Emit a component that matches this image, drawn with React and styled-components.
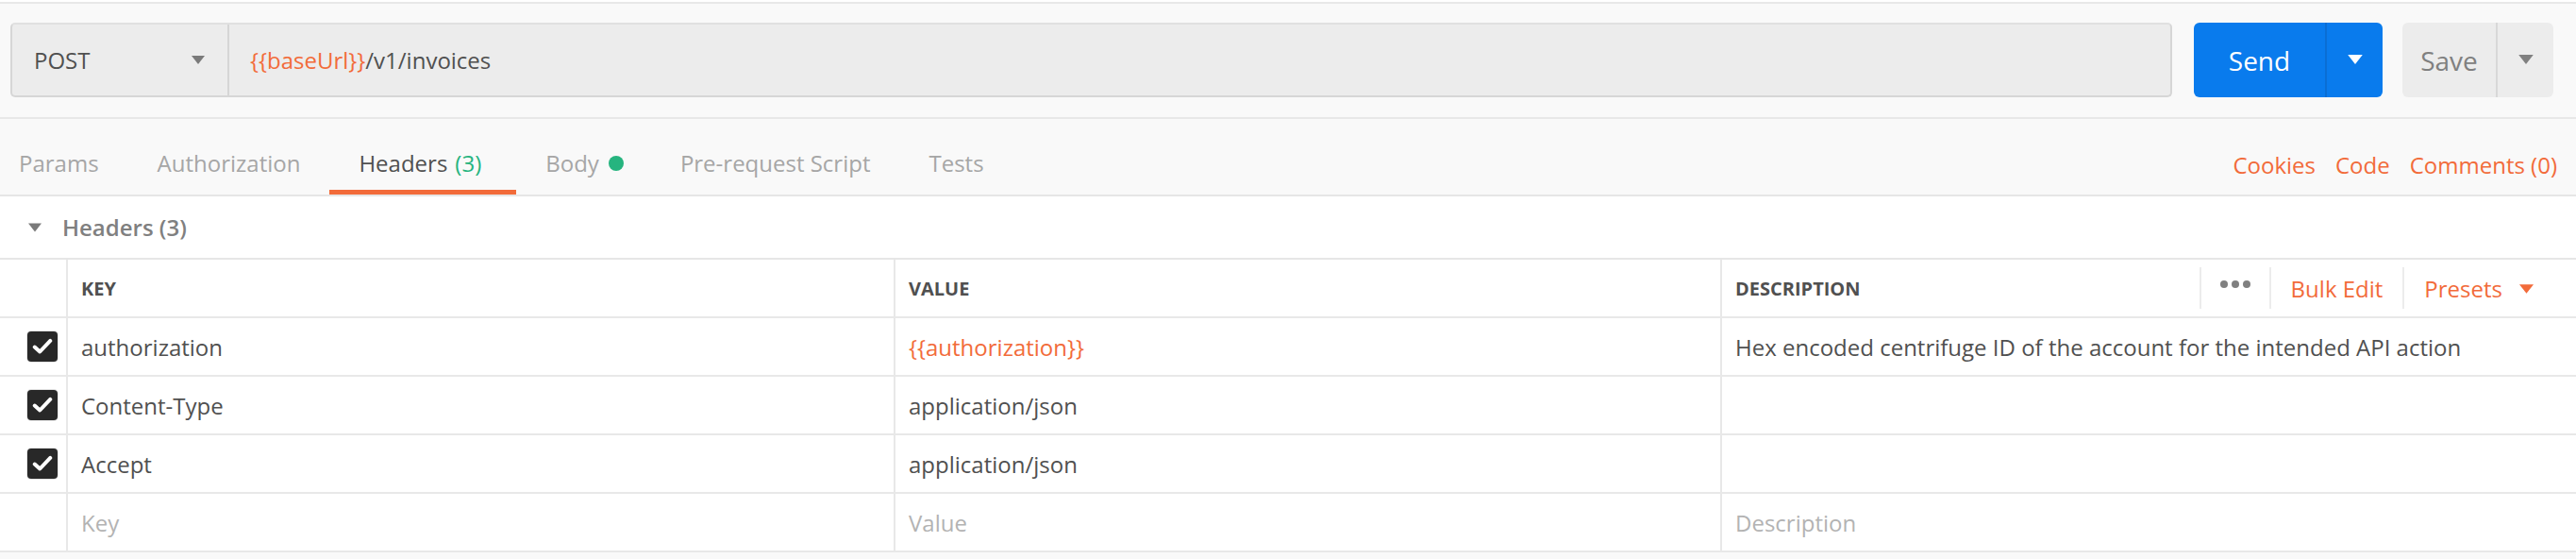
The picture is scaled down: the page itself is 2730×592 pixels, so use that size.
import React from "react";
import styled, { createGlobalStyle } from "styled-components";

const GlobalStyle = createGlobalStyle`
  html, body {
    margin: 0;
    padding: 0;
    background: #ffffff;
  }
  body {
    font-family: "Open Sans", "Noto Sans", sans-serif;
    color: #505050;
    -webkit-font-smoothing: antialiased;
  }
`;

const ORANGE = "#f26b3a";

const tabs = [
  { label: "Params" },
  { label: "Authorization" },
  { label: "Headers", count: "(3)", active: true },
  { label: "Body", dot: true },
  { label: "Pre-request Script" },
  { label: "Tests" },
];

const headers = [
  {
    key: "authorization",
    value: "{{authorization}}",
    variable: true,
    description: "Hex encoded centrifuge ID of the account for the intended API action",
  },
  { key: "Content-Type", value: "application/json" },
  { key: "Accept", value: "application/json" },
];

const Caret = ({ color = "#7a7a7a", width = 14, height = 9 }) => (
  <svg width={width} height={height} viewBox="0 0 14 9">
    <path d="M0 0 L14 0 L7 9 Z" fill={color} />
  </svg>
);

const App = () => {
  return (
    <Page>
      <GlobalStyle />
      <RequestBar>
        <UrlGroup>
          <MethodSelect>
            <span>POST</span>
            <Caret />
          </MethodSelect>
          <UrlInput>
            <Variable>{"{{baseUrl}}"}</Variable>/v1/invoices
          </UrlInput>
        </UrlGroup>
        <SplitButton $primary>
          <MainPart $primary $width={139}>Send</MainPart>
          <CaretPart $primary>
            <Caret color="#ffffff" width={16} height={10} />
          </CaretPart>
        </SplitButton>
        <SplitButton>
          <MainPart $width={99}>Save</MainPart>
          <CaretPart>
            <Caret color="#808080" width={16} height={10} />
          </CaretPart>
        </SplitButton>
      </RequestBar>

      <TabBar>
        <TabList>
          {tabs.map((t) => (
            <Tab key={t.label} $active={t.active}>
              {t.label}
              {t.count && <Count>{t.count}</Count>}
              {t.dot && <Dot />}
            </Tab>
          ))}
        </TabList>
        <Links>
          <LinkText>Cookies</LinkText>
          <LinkText>Code</LinkText>
          <LinkText>Comments (0)</LinkText>
        </Links>
      </TabBar>

      <SectionTitle>
        <Caret color="#7a7a7a" width={14} height={10} />
        <span>Headers (3)</span>
      </SectionTitle>

      <Table>
        <Row $head>
          <CheckCell />
          <Cell>
            <HeadLabel>KEY</HeadLabel>
          </Cell>
          <Cell>
            <HeadLabel>VALUE</HeadLabel>
          </Cell>
          <Cell $last>
            <HeadLabel>DESCRIPTION</HeadLabel>
            <HeadActions>
              <Action $narrow>
                <Dots>
                  <i />
                  <i />
                  <i />
                </Dots>
              </Action>
              <Action>
                <LinkText>Bulk Edit</LinkText>
              </Action>
              <Action $caret>
                <LinkText>Presets</LinkText>
                <Caret color={ORANGE} width={15} height={12} />
              </Action>
            </HeadActions>
          </Cell>
        </Row>
        {headers.map((h) => (
          <Row key={h.key}>
            <CheckCell>
              <CheckBox>
                <svg width="22" height="18" viewBox="0 0 20 16">
                  <path
                    d="M2.5 8.5 L7.5 13 L17.5 2.5"
                    fill="none"
                    stroke="#ffffff"
                    strokeWidth="3.6"
                    strokeLinecap="round"
                    strokeLinejoin="round"
                  />
                </svg>
              </CheckBox>
            </CheckCell>
            <Cell>{h.key}</Cell>
            <Cell>{h.variable ? <Variable>{h.value}</Variable> : h.value}</Cell>
            <Cell $last>{h.description}</Cell>
          </Row>
        ))}
        <Row>
          <CheckCell />
          <Cell $placeholder>Key</Cell>
          <Cell $placeholder>Value</Cell>
          <Cell $placeholder $last>
            Description
          </Cell>
        </Row>
      </Table>
      <Footer />
    </Page>
  );
};

export default App;

const Page = styled.div`
  width: 2730px;
  min-height: 592px;
  display: flex;
  flex-direction: column;
  background: #f9f9f9;
  box-sizing: border-box;
  border-top: 2px solid #ffffff;
`;

const RequestBar = styled.div`
  display: flex;
  align-items: stretch;
  gap: 21px;
  height: 79px;
  padding: 20px 24px 21px 11px;
  background: #f9f9f9;
  border-top: 2px solid #e8e8e8;
  border-bottom: 2px solid #e8e8e8;
`;

const UrlGroup = styled.div`
  flex: 1;
  display: flex;
  background: #ececec;
  border: 2px solid #d6d6d6;
  border-top-color: #e0e0e0;
  border-radius: 5px;
  box-sizing: border-box;
  margin-right: 2px;
`;

const MethodSelect = styled.div`
  width: 230px;
  flex: none;
  display: flex;
  align-items: center;
  justify-content: space-between;
  box-sizing: border-box;
  padding: 0 24px 0 23px;
  border-right: 2px solid #d6d6d6;
  font-size: 24px;
  color: #505050;
`;

const UrlInput = styled.div`
  flex: 1;
  display: flex;
  align-items: center;
  padding-left: 22px;
  font-size: 24px;
  color: #505050;
`;

const Variable = styled.span`
  color: ${ORANGE};
`;

const SplitButton = styled.div`
  display: flex;
  border-radius: 6px;
  overflow: hidden;
  background: ${(p) => (p.$primary ? "#097bed" : "#ececec")};
`;

const MainPart = styled.div`
  width: ${(p) => p.$width}px;
  display: flex;
  align-items: center;
  justify-content: center;
  font-size: 28px;
  color: ${(p) => (p.$primary ? "#ffffff" : "#808080")};
  border-right: 2px solid ${(p) => (p.$primary ? "#0a6ed4" : "#d8d8d8")};
`;

const CaretPart = styled.div`
  width: 59px;
  display: flex;
  align-items: center;
  justify-content: center;
  padding-bottom: 2px;
`;

const TabBar = styled.div`
  display: flex;
  align-items: stretch;
  justify-content: space-between;
  height: 80px;
  background: #f9f9f9;
  border-bottom: 2px solid #e6e6e6;
`;

const TabList = styled.div`
  display: flex;
  align-items: stretch;
`;

const Tab = styled.div`
  display: flex;
  align-items: center;
  padding: 18px 31px 0;
  font-size: 24px;
  color: ${(p) => (p.$active ? "#505050" : "#a6a6a6")};
  border-bottom: 5px solid ${(p) => (p.$active ? ORANGE : "transparent")};
  &:first-child {
    padding-left: 20px;
  }
`;

const Count = styled.span`
  color: #26b47f;
  margin-left: 8px;
  margin-right: 6px;
`;

const Dot = styled.span`
  width: 16px;
  height: 16px;
  border-radius: 50%;
  background: #26b47f;
  margin-left: 10px;
  margin-right: -2px;
`;

const Links = styled.div`
  display: flex;
  align-items: center;
  gap: 21px;
  padding: 16px 20px 0 0;
`;

const LinkText = styled.span`
  font-size: 24px;
  color: ${ORANGE};
  white-space: nowrap;
`;

const SectionTitle = styled.div`
  display: flex;
  align-items: center;
  gap: 22px;
  height: 65px;
  padding-left: 30px;
  background: #ffffff;
  font-size: 24px;
  font-weight: 600;
  color: #808080;
`;

const Table = styled.div`
  background: #ffffff;
  border-top: 2px solid #e6e6e6;
`;

const Row = styled.div`
  display: grid;
  grid-template-columns: 72px 877px 876px 1fr;
  height: 60px;
  border-bottom: 2px solid #e8e8e8;
`;

const CheckCell = styled.div`
  display: flex;
  align-items: center;
  padding-left: 29px;
  border-right: 2px solid #e8e8e8;
`;

const CheckBox = styled.div`
  width: 32px;
  height: 32px;
  box-sizing: border-box;
  border-radius: 4px;
  background: #282828;
  box-shadow: 0 0 0 1px #e4e4e4;
  display: flex;
  align-items: center;
  justify-content: center;
`;

const Cell = styled.div`
  display: flex;
  align-items: center;
  padding-left: 14px;
  font-size: 24px;
  color: ${(p) => (p.$placeholder ? "#b3b3b3" : "#505050")};
  border-right: ${(p) => (p.$last ? "none" : "2px solid #e8e8e8")};
  white-space: nowrap;
  overflow: hidden;
`;

const HeadLabel = styled.span`
  font-size: 20px;
  font-weight: 700;
  color: #505050;
`;

const HeadActions = styled.div`
  margin-left: auto;
  display: flex;
  align-items: center;
  align-self: center;
  padding-right: 24px;
`;

const Action = styled.div`
  display: flex;
  align-items: center;
  gap: 18px;
  height: 44px;
  padding: 0 ${(p) => (p.$narrow ? "20px" : "21px")};
  border-left: 2px solid #ececec;
  svg {
    margin-top: 2px;
  }
`;

const Dots = styled.div`
  display: flex;
  gap: 4px;
  margin-bottom: 8px;
  i {
    width: 8px;
    height: 8px;
    border-radius: 50%;
    background: #808080;
  }
`;

const Footer = styled.div`
  flex: 1;
  background: #f9f9f9;
`;
